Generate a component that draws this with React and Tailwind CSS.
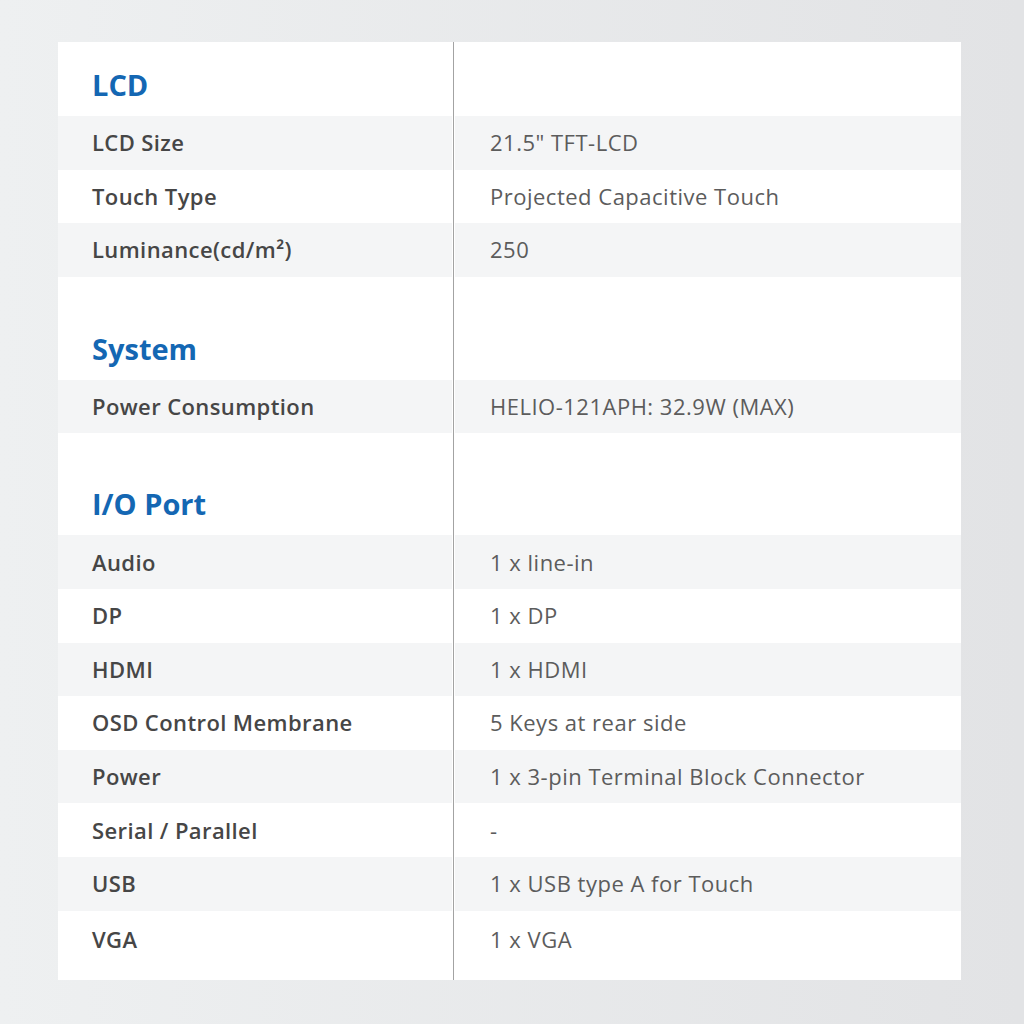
const sections = [
  {
    title: 'LCD',
    height: 'h-[74px]',
    rows: [
      ['LCD Size', '21.5" TFT-LCD'],
      ['Touch Type', 'Projected Capacitive Touch'],
      ['Luminance(cd/m²)', '250'],
    ],
  },
  {
    title: 'System',
    height: 'h-[103px]',
    rows: [['Power Consumption', 'HELIO-121APH: 32.9W (MAX)']],
  },
  {
    title: 'I/O Port',
    height: 'h-[102px]',
    rows: [
      ['Audio', '1 x line-in'],
      ['DP', '1 x DP'],
      ['HDMI', '1 x HDMI'],
      ['OSD Control Membrane', '5 Keys at rear side'],
      ['Power', '1 x 3-pin Terminal Block Connector'],
      ['Serial / Parallel', '-'],
      ['USB', '1 x USB type A for Touch'],
      ['VGA', '1 x VGA'],
    ],
  },
]

function Divider() {
  return <div className="w-[3px] shrink-0 self-stretch bg-[#a3a3a3] border-x border-white" />
}

function HeaderRow({ title, height }) {
  return (
    <div className={`flex ${height}`}>
      <div className="w-[394px] shrink-0 flex items-end pl-[34px] pb-[14px]">
        <h2 className="text-[29px] leading-[34px] font-bold text-[#1467b3]">{title}</h2>
      </div>
      <Divider />
      <div className="flex-1" />
    </div>
  )
}

function SpecRow({ label, value, shaded, last }) {
  const bg = shaded ? 'bg-[#f4f5f6]' : 'bg-white'
  return (
    <div className={`flex ${last ? 'h-[69px]' : 'h-[53.6px]'}`}>
      <div className={`w-[394px] shrink-0 flex items-center pl-[34px] ${bg} ${last ? 'pb-[12px]' : ''}`}>
        <span className="text-[22px] tracking-[0.4px] font-semibold text-[#464646]">{label}</span>
      </div>
      <Divider />
      <div className={`flex-1 flex items-center pl-[35px] ${bg} ${last ? 'pb-[12px]' : ''}`}>
        <span className="text-[22px] tracking-[0.5px] text-[#5c5c5c]">{value}</span>
      </div>
    </div>
  )
}

export default function App() {
  return (
    <div
      className="w-[1024px] h-[1024px] bg-linear-to-r from-[#eef0f1] to-[#e2e3e5] pt-[42px] pl-[58px]"
      style={{ fontFamily: '"Open Sans", "Noto Sans", sans-serif' }}
    >
      <div className="w-[903px] bg-white flex flex-col">
        {sections.map((s, si) => (
          <div key={s.title} className="flex flex-col">
            <HeaderRow title={s.title} height={s.height} />
            {s.rows.map(([label, value], i) => (
              <SpecRow
                key={label}
                label={label}
                value={value}
                shaded={i % 2 === 0}
                last={si === sections.length - 1 && i === s.rows.length - 1}
              />
            ))}
          </div>
        ))}
      </div>
    </div>
  )
}
